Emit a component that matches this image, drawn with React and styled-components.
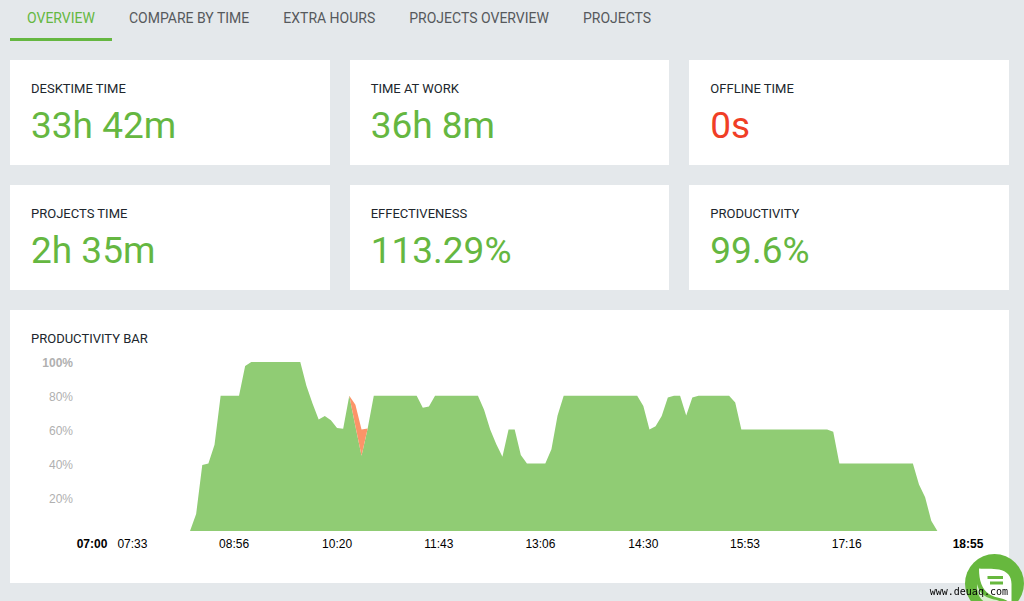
import React from 'react';
import styled, { createGlobalStyle } from 'styled-components';

const TABS = ['Overview', 'Compare by time', 'Extra hours', 'Projects overview', 'Projects']

const STATS = [
    { label: 'Desktime time', value: '33h 42m' },
    { label: 'Time at work', value: '36h 8m' },
    { label: 'Offline time', value: '0s', alert: true },
    { label: 'Projects time', value: '2h 35m' },
    { label: 'Effectiveness', value: '113.29%' },
    { label: 'Productivity', value: '99.6%' },
]

const LEVELS = [100, 80, 60, 40, 20]

// gap = minutes until the next tick
const TICKS = [
    { time: '07:00', gap: 33, edge: true },
    { time: '07:33', gap: 83 },
    { time: '08:56', gap: 84 },
    { time: '10:20', gap: 83 },
    { time: '11:43', gap: 83 },
    { time: '13:06', gap: 84 },
    { time: '14:30', gap: 83 },
    { time: '15:53', gap: 83 },
    { time: '17:16', gap: 99 },
    { time: '18:55', gap: 0, edge: true },
]

const DAY_MINUTES = 715
const STEP = 5
const FIRST = 80

const fill = (value, count) => Array(count).fill(value)

// productive time in percent, one sample each five minutes from 08:20
const PRODUCTIVE = [
    0, 10, 39, 40, 51, ...fill(80, 4), 97.6, ...fill(100, 9),
    86, 75.5, 66, 68, 65.5, 61, 60.5, 80, 62, 44.5, 60.7, ...fill(80, 8),
    73, 73.7, ...fill(80, 8), 71.7, 60, 51.4, 44, 60, 60, 45, ...fill(40, 4),
    48.4, 68.4, ...fill(80, 13), 74, 60, 62, 68, 79, 80, 80, 68.4, 79,
    ...fill(80, 6), 76, ...fill(60, 15), 58.7, ...fill(40, 13), 27.5, 20, 6, 0,
]
// unproductive time stacked on top, between 10:30 and 10:45
const UNPRODUCTIVE_FROM = 26
const UNPRODUCTIVE = [80, 74.7, 60, 60.7]

const toPoint = (value, i) => `${FIRST + i * STEP},${100 - value}`

const productivePoints = PRODUCTIVE.map(toPoint).join(' ')
const unproductivePoints = [
    ...UNPRODUCTIVE.map((value, i) => toPoint(value, UNPRODUCTIVE_FROM + i)),
    toPoint(PRODUCTIVE[UNPRODUCTIVE_FROM + 2], UNPRODUCTIVE_FROM + 2),
    toPoint(PRODUCTIVE[UNPRODUCTIVE_FROM + 1], UNPRODUCTIVE_FROM + 1),
].join(' ')

const ChatIcon = () => (
    <svg width="59" height="59" viewBox="0 0 59 59" aria-hidden="true">
        <path d="M14 14.5C20 15 27 14 34 15.5C42 17 46.5 22 46.5 30V50C40 43 31 45 24 40C17 35 14 27 14 14.5Z" fill="#fff" />
        <path d="M12 30C14 38 19 43 27 45C32 46 37 47 40 51H28C18 50 11 42 12 30Z" fill="#d9efcf" />
        <path d="M22.5 23.5H38M25 29H38" stroke="#67b83e" strokeWidth="3" />
    </svg>
)

const App = () => (
    <>
        <GlobalStyle />
        <Page>
            <Tabs>
                {TABS.map((tab, i) => <Tab key={tab} href="#" $active={i === 0}>{tab}</Tab>)}
            </Tabs>
            <Stats>
                {STATS.map(({ label, value, alert }) => (
                    <Card key={label}>
                        <Label>{label}</Label>
                        <Value $alert={alert}>{value}</Value>
                    </Card>
                ))}
            </Stats>
            <Card>
                <Label>Productivity bar</Label>
                <Chart>
                    <Levels>
                        {LEVELS.map(level => <Level key={level} $bold={level === 100}>{level}%</Level>)}
                    </Levels>
                    <Plot>
                        <Area viewBox={`0 0 ${DAY_MINUTES} 100`} preserveAspectRatio="none">
                            <polygon points={productivePoints} fill="#90cc74" />
                            <polygon points={unproductivePoints} fill="#fc9468" />
                        </Area>
                        <Ticks>
                            {TICKS.map(({ time, gap, edge }) => (
                                <Tick key={time} $gap={gap} $bold={edge}><span>{time}</span></Tick>
                            ))}
                        </Ticks>
                    </Plot>
                </Chart>
            </Card>
        </Page>
        <ChatButton aria-label="Chat"><ChatIcon /></ChatButton>
        <SiteMark>www.deuaq.com</SiteMark>
    </>
)
export default App;

const GlobalStyle = createGlobalStyle`
    * {
        box-sizing: border-box;
    }
    html {
        overflow: hidden;
    }
    body {
        margin: 0;
        background-color: #e4e8eb;
        font-family: Roboto, sans-serif;
        color: #20262d;
    }
`
const Page = styled.main`
    min-height: 100vh;
    padding: 0 15px 18px 10px;
`
const Tabs = styled.nav`
    display: flex;
    height: 41px;
`
const Tab = styled.a`
    padding: 8px 17px 0;
    border-bottom: 3px solid ${props => props.$active ? '#65b741' : 'transparent'};
    font-size: 14px;
    line-height: 20px;
    text-transform: uppercase;
    text-decoration: none;
    white-space: nowrap;
    color: ${props => props.$active ? '#65b741' : '#56595c'};
`
const Stats = styled.section`
    display: grid;
    grid-template-columns: repeat(3, 1fr);
    gap: 20px;
    margin: 19px 0 20px;
`
const Card = styled.section`
    padding: 19px 21px 17px;
    background-color: #fff;
`
const Label = styled.h2`
    margin: 0;
    font-size: 13px;
    font-weight: 400;
    line-height: 20px;
    text-transform: uppercase;
`
const Value = styled.p`
    margin: 4px 0 0;
    font-size: 37px;
    line-height: 45px;
    color: ${props => props.$alert ? '#f03e26' : '#65b741'};
`
const Chart = styled.div`
    display: flex;
    margin-top: 13px;
    font-family: "Liberation Sans", Arial, sans-serif;
    font-size: 12px;
`
const Levels = styled.div`
    display: flex;
    flex-direction: column;
    gap: 14px;
    width: 42px;
    margin-top: -9px;
    line-height: 20px;
    text-align: right;
    color: #b0b0b0;
`
const Level = styled.span`
    font-weight: ${props => props.$bold ? 700 : 400};
`
const Plot = styled.div`
    flex: 1;
    padding: 0 20px 0 19px;
`
const Area = styled.svg`
    display: block;
    width: 100%;
    height: 169px;
`
const Ticks = styled.div`
    display: flex;
    padding-bottom: 9px;
    line-height: 26px;
    color: #000;
`
const Tick = styled.div`
    display: flex;
    flex: ${props => props.$gap} 1 0;
    min-width: 0;
    font-weight: ${props => props.$bold ? 700 : 400};
    span {
        display: flex;
        justify-content: center;
        width: 0;
    }
`
const ChatButton = styled.button`
    position: fixed;
    right: 0;
    bottom: -12px;
    width: 59px;
    height: 59px;
    padding: 0;
    border: 0;
    border-radius: 50%;
    background-color: #67b83e;
`
const SiteMark = styled.span`
    position: fixed;
    right: 16px;
    bottom: 2px;
    font-family: "DejaVu Sans Mono", monospace;
    font-size: 10px;
    line-height: 14px;
    color: #000;
`
